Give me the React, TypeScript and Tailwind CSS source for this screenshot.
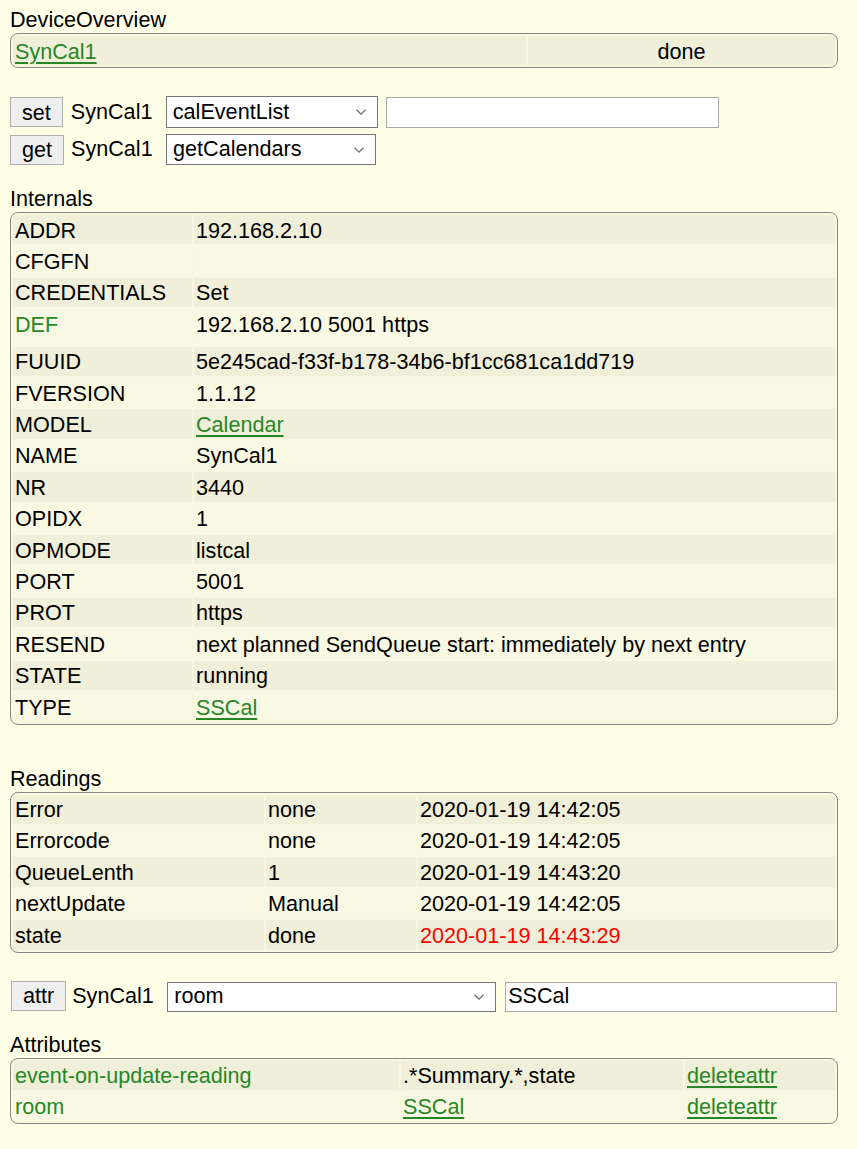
import React from 'react';

const LINK = 'text-[#278727] underline underline-offset-[3px] decoration-[2px]';

type Cell = { text: string; className?: string; link?: boolean };

function Block({ widths, rows, extraPad }: { widths: number[]; rows: Cell[][]; extraPad?: number }) {
  return (
    <table className="w-[828px] table-fixed border-separate border-spacing-[2px] rounded-[8px] border border-[#888888] bg-[#F8F8E0]">
      <tbody>
        {rows.map((row, i) => (
          <tr key={i} className={i % 2 === 0 ? 'bg-[#EFEFDA]' : 'bg-[#F8F8E3]'}>
            {row.map((c, j) => (
              <td
                key={j}
                style={i === 0 ? { width: widths[j] } : undefined}
                className={
                  'px-[2px] pt-[3.5px] leading-[23.4px] align-top whitespace-nowrap ' +
                  (extraPad === i ? 'pb-[8.5px] ' : 'pb-[2.5px] ') +
                  (c.className || '')
                }
              >
                {c.link ? <a className={LINK}>{c.text}</a> : c.text}
              </td>
            ))}
          </tr>
        ))}
      </tbody>
    </table>
  );
}

function Btn({ label }: { label: string }) {
  return (
    <button className="h-[30px] px-[11px] bg-[#EFEFEF] border border-[#B0B0B0] leading-[23px] text-black">
      {label}
    </button>
  );
}

function Select({ value, w }: { value: string; w: string }) {
  return (
    <div className={'h-[32px] bg-white border border-[#767676] flex items-center pl-[6px] pr-[10px] ' + w}>
      <span className="flex-1">{value}</span>
      <svg width="12" height="8" viewBox="0 0 12 8" className="shrink-0">
        <path d="M1.5 1.8 L6 6.2 L10.5 1.8" fill="none" stroke="#6a6a6a" strokeWidth="1.2" />
      </svg>
    </div>
  );
}

export default function App() {
  const internals: Cell[][] = [
    [{ text: 'ADDR' }, { text: '192.168.2.10' }],
    [{ text: 'CFGFN' }, { text: '' }],
    [{ text: 'CREDENTIALS' }, { text: 'Set' }],
    [{ text: 'DEF', className: 'text-[#278727]' }, { text: '192.168.2.10 5001 https' }],
    [{ text: 'FUUID' }, { text: '5e245cad-f33f-b178-34b6-bf1cc681ca1dd719' }],
    [{ text: 'FVERSION' }, { text: '1.1.12' }],
    [{ text: 'MODEL' }, { text: 'Calendar', link: true }],
    [{ text: 'NAME' }, { text: 'SynCal1' }],
    [{ text: 'NR' }, { text: '3440' }],
    [{ text: 'OPIDX' }, { text: '1' }],
    [{ text: 'OPMODE' }, { text: 'listcal' }],
    [{ text: 'PORT' }, { text: '5001' }],
    [{ text: 'PROT' }, { text: 'https' }],
    [{ text: 'RESEND' }, { text: 'next planned SendQueue start: immediately by next entry' }],
    [{ text: 'STATE' }, { text: 'running' }],
    [{ text: 'TYPE' }, { text: 'SSCal', link: true }],
  ];

  const readings: Cell[][] = [
    [{ text: 'Error' }, { text: 'none' }, { text: '2020-01-19 14:42:05' }],
    [{ text: 'Errorcode' }, { text: 'none' }, { text: '2020-01-19 14:42:05' }],
    [{ text: 'QueueLenth' }, { text: '1' }, { text: '2020-01-19 14:43:20' }],
    [{ text: 'nextUpdate' }, { text: 'Manual' }, { text: '2020-01-19 14:42:05' }],
    [{ text: 'state' }, { text: 'done' }, { text: '2020-01-19 14:43:29', className: 'text-[#FF0000]' }],
  ];

  const attributes: Cell[][] = [
    [
      { text: 'event-on-update-reading', className: 'text-[#278727]' },
      { text: '.*Summary.*,state' },
      { text: 'deleteattr', link: true },
    ],
    [
      { text: 'room', className: 'text-[#278727]' },
      { text: 'SSCal', link: true },
      { text: 'deleteattr', link: true },
    ],
  ];

  return (
    <div className="min-h-screen bg-[#FFFFE7] pl-[10px] pt-[6px] pb-[20px] text-[21.6px] text-black font-['Liberation_Sans',Arial,sans-serif]">
      {/* Device overview */}
      <div className="leading-[27px]">DeviceOverview</div>
      <table className="w-[828px] table-fixed border-separate border-spacing-[2px] rounded-[8px] border border-[#888888] bg-[#F8F8E0]">
        <tbody>
          <tr className="bg-[#EFEFDA]">
            <td className="w-[513px] px-[2px] pt-[3.5px] pb-[2.5px] leading-[23px]">
              <a className={LINK}>SynCal1</a>
            </td>
            <td className="w-[307px] px-[2px] pt-[3.5px] pb-[2.5px] leading-[23px] text-center">done</td>
          </tr>
        </tbody>
      </table>

      {/* set / get */}
      <div className="mt-[28px] flex items-center h-[32px]">
        <Btn label="set" />
        <span className="ml-[8px] w-[95px]">SynCal1</span>
        <Select value="calEventList" w="w-[212px]" />
        <input className="ml-[8px] h-[31px] w-[333px] bg-white border border-[#AAAAAA]" />
      </div>
      <div className="mt-[6px] flex items-center h-[31px]">
        <Btn label="get" />
        <span className="ml-[7px] w-[95px]">SynCal1</span>
        <Select value="getCalendars" w="w-[210px] !h-[31px]" />
      </div>

      {/* Internals */}
      <div className="mt-[21px] leading-[26px]">Internals</div>
      <Block widths={[179, 641]} rows={internals} extraPad={3} />

      {/* Readings */}
      <div className="mt-[41px] leading-[26px]">Readings</div>
      <Block widths={[251, 150, 417]} rows={readings} />

      {/* attr */}
      <div className="mt-[29px] flex items-center h-[30px]">
        <div className="ml-[1px]">
          <Btn label="attr" />
        </div>
        <span className="ml-[6px] w-[95px]">SynCal1</span>
        <Select value="room" w="w-[329px] !h-[30px]" />
        <div className="ml-[9px] h-[30px] w-[332px] bg-white border border-[#AAAAAA] flex items-center px-[2px]">SSCal</div>
      </div>

      {/* Attributes */}
      <div className="mt-[20px] leading-[26px]">Attributes</div>
      <Block widths={[386, 282, 150]} rows={attributes} />
    </div>
  );
}
